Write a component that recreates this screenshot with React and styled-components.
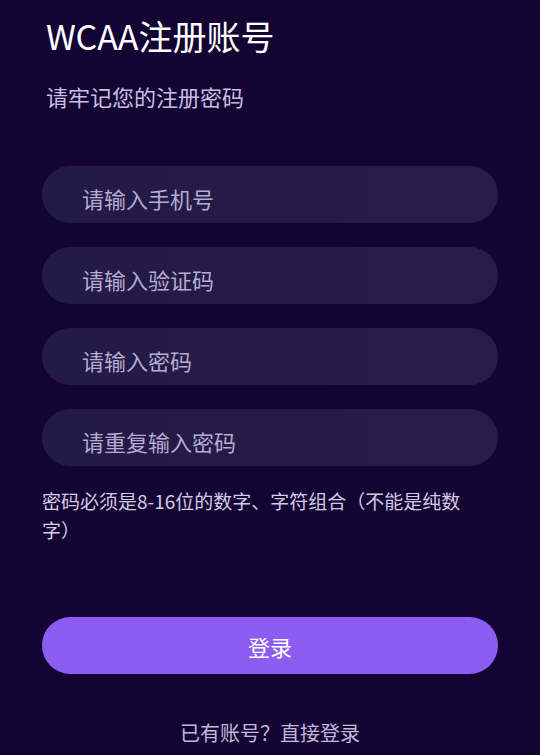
import React from "react";
import styled, { createGlobalStyle } from "styled-components";

const Global = createGlobalStyle`
  html, body { margin: 0; padding: 0; background: #140434; }
  body { font-family: "Noto Sans CJK SC", "Noto Sans", sans-serif; }
`;

const Page = styled.div`
  width: 540px;
  height: 755px;
  background: #140434;
  box-sizing: border-box;
  padding: 0 42px;
  display: flex;
  flex-direction: column;
  overflow: hidden;
`;

const Title = styled.h1`
  margin: 14px 0 0 4px;
  font-size: 34px;
  font-weight: 400;
  line-height: 44px;
  color: #ffffff;
`;

const Subtitle = styled.p`
  margin: 23px 0 0 4px;
  font-size: 22px;
  line-height: 30px;
  color: #c9bfe0;
`;

const Form = styled.div`
  margin-top: 55px;
  display: flex;
  flex-direction: column;
  gap: 24px;
`;

const Field = styled.input`
  height: 57px;
  border: none;
  outline: none;
  border-radius: 29px;
  background: linear-gradient(90deg, #221a47 0%, #2a1a4b 100%);
  padding: 6px 0 0 40px;
  font-family: inherit;
  font-size: 22px;
  color: #fff;
  box-sizing: border-box;
  width: 100%;
  &::placeholder { color: #b6abd0; }
`;

const Hint = styled.p`
  margin: 20px 0 0 0;
  padding-right: 30px;
  font-size: 19px;
  line-height: 29px;
  color: #d3cbe3;
`;

const Button = styled.button`
  margin-top: 73px;
  height: 57px;
  border: none;
  border-radius: 29px;
  background: #8c5cf3;
  color: #fff;
  font-family: inherit;
  font-size: 22px;
  cursor: pointer;
`;

const Footer = styled.p`
  margin: 45px 0 0 0;
  text-align: center;
  font-size: 20px;
  line-height: 28px;
  color: #c3b8da;
`;

export default function App() {
  return (
    <Page>
      <Global />
      <Title>WCAA注册账号</Title>
      <Subtitle>请牢记您的注册密码</Subtitle>
      <Form>
        <Field placeholder="请输入手机号" />
        <Field placeholder="请输入验证码" />
        <Field type="password" placeholder="请输入密码" />
        <Field type="password" placeholder="请重复输入密码" />
      </Form>
      <Hint>密码必须是8-16位的数字、字符组合（不能是纯数字）</Hint>
      <Button>登录</Button>
      <Footer>已有账号？直接登录</Footer>
    </Page>
  );
}
